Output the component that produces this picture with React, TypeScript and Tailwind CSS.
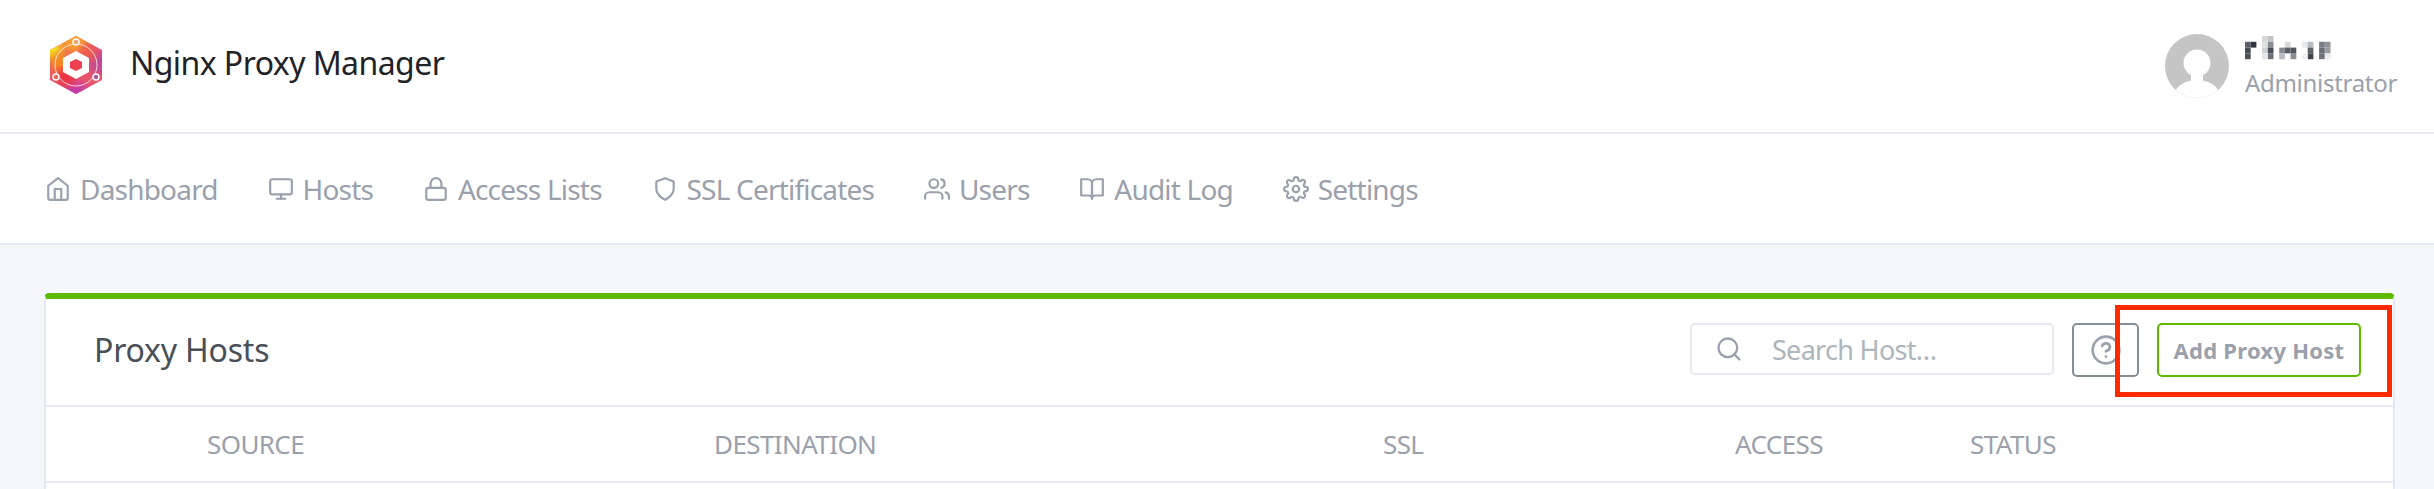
import React from "react";

const Ico = ({ children, className = "w-[26px] h-[26px]" }: { children: React.ReactNode; className?: string }) => (
  <svg viewBox="0 0 24 24" fill="none" stroke="currentColor" strokeWidth="2" strokeLinecap="round" strokeLinejoin="round" className={className}>
    {children}
  </svg>
);

const nav: [string, React.ReactNode][] = [
  ["Dashboard", <><path d="M3 9l9-7 9 7v11a2 2 0 0 1-2 2H5a2 2 0 0 1-2-2z" /><polyline points="9 22 9 12 15 12 15 22" /></>],
  ["Hosts", <><rect x="2" y="3" width="20" height="14" rx="2" /><line x1="8" y1="21" x2="16" y2="21" /><line x1="12" y1="17" x2="12" y2="21" /></>],
  ["Access Lists", <><rect x="3" y="11" width="18" height="11" rx="2" /><path d="M7 11V7a5 5 0 0 1 10 0v4" /></>],
  ["SSL Certificates", <path d="M12 22s8-4 8-10V5l-8-3-8 3v7c0 6 8 10 8 10z" />],
  ["Users", <><path d="M17 21v-2a4 4 0 0 0-4-4H5a4 4 0 0 0-4 4v2" /><circle cx="9" cy="7" r="4" /><path d="M23 21v-2a4 4 0 0 0-3-3.87" /><path d="M16 3.13a4 4 0 0 1 0 7.75" /></>],
  ["Audit Log", <><path d="M2 3h6a4 4 0 0 1 4 4v14a3 3 0 0 0-3-3H2z" /><path d="M22 3h-6a4 4 0 0 0-4 4v14a3 3 0 0 1 3-3h7z" /></>],
  ["Settings", <><circle cx="12" cy="12" r="3" /><path d="M19.4 15a1.65 1.65 0 0 0 .33 1.82l.06.06a2 2 0 0 1 0 2.83 2 2 0 0 1-2.83 0l-.06-.06a1.65 1.65 0 0 0-1.82-.33 1.65 1.65 0 0 0-1 1.51V21a2 2 0 0 1-2 2 2 2 0 0 1-2-2v-.09A1.65 1.65 0 0 0 9 19.4a1.65 1.65 0 0 0-1.82.33l-.06.06a2 2 0 0 1-2.83 0 2 2 0 0 1 0-2.83l.06-.06a1.65 1.65 0 0 0 .33-1.82 1.65 1.65 0 0 0-1.51-1H3a2 2 0 0 1-2-2 2 2 0 0 1 2-2h.09A1.65 1.65 0 0 0 4.6 9a1.65 1.65 0 0 0-.33-1.82l-.06-.06a2 2 0 0 1 0-2.83 2 2 0 0 1 2.83 0l.06.06a1.65 1.65 0 0 0 1.82.33H9a1.65 1.65 0 0 0 1-1.51V3a2 2 0 0 1 2-2 2 2 0 0 1 2 2v.09a1.65 1.65 0 0 0 1 1.51 1.65 1.65 0 0 0 1.82-.33l.06-.06a2 2 0 0 1 2.83 0 2 2 0 0 1 0 2.83l-.06.06a1.65 1.65 0 0 0-.33 1.82V9a1.65 1.65 0 0 0 1.51 1H21a2 2 0 0 1 2 2 2 2 0 0 1-2 2h-.09a1.65 1.65 0 0 0-1.51 1z" /></>],
];

const Logo = () => (
  <svg viewBox="0 0 60 64" className="w-[60px] h-[64px] mb-[2px]">
    <defs>
      <clipPath id="hex"><polygon points="30,3 56,17 56,47 30,61 4,47 4,17" /></clipPath>
      <filter id="soft"><feGaussianBlur stdDeviation="0.7" /></filter>
      <filter id="big"><feGaussianBlur stdDeviation="4" /></filter>
    </defs>
    <g filter="url(#soft)">
      <g clipPath="url(#hex)">
        <rect width="60" height="64" fill="#e8566a" />
        <circle cx="6" cy="16" r="11" fill="#f5e01c" filter="url(#big)" />
        <circle cx="28" cy="6" r="14" fill="#f9a02a" filter="url(#big)" />
        <circle cx="14" cy="30" r="10" fill="#f78a1e" filter="url(#big)" />
        <circle cx="54" cy="30" r="11" fill="#c2489a" filter="url(#big)" />
        <circle cx="30" cy="62" r="13" fill="#c43aa8" filter="url(#big)" />
        <circle cx="20" cy="44" r="9" fill="#ea2f3c" filter="url(#big)" />
        <circle cx="42" cy="20" r="8" fill="#ee5a4a" filter="url(#big)" />
      </g>
      <circle cx="30" cy="32" r="21" fill="none" stroke="#fff" strokeOpacity="0.75" strokeWidth="1" />
      <circle cx="30" cy="9" r="3" fill="#f0a56a" stroke="#fff" strokeWidth="1.4" />
      <circle cx="10" cy="44" r="3" fill="#ec6a56" stroke="#fff" strokeWidth="1.4" />
      <circle cx="50" cy="44" r="3" fill="#a95ca6" stroke="#fff" strokeWidth="1.4" />
      <polygon points="30,18 43,25 43,39 30,46 17,39 17,25" fill="#fff" />
      <polygon points="30,26 36,29 36,35 30,38 24,35 24,29" fill="#ef3f4f" />
    </g>
  </svg>
);

const Avatar = () => (
  <svg viewBox="0 0 64 64" className="w-16 h-16 shrink-0">
    <defs>
      <clipPath id="av"><circle cx="32" cy="32" r="32" /></clipPath>
    </defs>
    <g clipPath="url(#av)">
      <rect width="64" height="64" fill="#c5c5c5" />
      <circle cx="32" cy="29" r="13.5" fill="#fff" />
      <rect x="26" y="38" width="12" height="12" fill="#fff" />
      <ellipse cx="32" cy="62" rx="23" ry="16" fill="#fff" />
    </g>
  </svg>
);

const mosaic: [number, number, string][] = [
  [0, 1, "#5b6068"], [1, 1, "#30363f"], [0, 2, "#4a5058"], [0, 3, "#4d535b"],
  [3, 1, "#dfe0e2"], [3, 2, "#cfd1d4"], [4, 1, "#8a8e94"], [4, 0, "#c0c2c5"], [3, 0, "#d4d6d8"],
  [4, 2, "#4a5058"], [4, 3, "#6d7278"], [3, 3, "#e6e7e8"],
  [6, 2, "#888c92"], [6, 3, "#b7babe"], [7, 1, "#d6d8da"], [7, 2, "#5a5f67"], [8, 3, "#8b8f95"], [8, 2, "#50565e"],
  [10, 1, "#e9eaeb"], [11, 1, "#b8bbbe"], [11, 2, "#5e636a"], [11, 3, "#3f454d"], [10, 3, "#f0f0f1"],
  [13, 1, "#777c82"], [14, 1, "#8e9297"], [13, 2, "#6b7076"], [14, 2, "#9a9da2"], [13, 3, "#6f7379"], [14, 3, "#ececed"],
];

export default function App() {
  return (
    <div className="h-[489px] overflow-hidden bg-[#f5f7fb] font-['Noto_Sans',sans-serif]">
      <header className="h-[134px] bg-white border-b-2 border-[#e6e9f1] flex items-center justify-between pl-[46px] pr-[37px]">
        <div className="flex items-center gap-[24px]">
          <Logo />
          <span className="text-[32px] leading-none tracking-[-0.57px] text-[#1f2226] mb-[6px]">Nginx Proxy Manager</span>
        </div>
        <div className="flex items-center gap-[16px]">
          <Avatar />
          <div className="flex flex-col pt-[3px]">
            <svg viewBox="0 0 90 24" className="w-[90px] h-[24px] mb-[6px]">
              {mosaic.map(([x, y, c], i) => (
                <rect key={i} x={x * 5.7} y={y * 5.8} width="5.7" height="5.8" fill={c} />
              ))}
            </svg>
            <span className="text-[24px] leading-[34px] tracking-[-0.3px] text-[#9aa0ac]">Administrator</span>
          </div>
        </div>
      </header>
      <nav className="h-[111px] bg-white border-b-2 border-[#e6e9f1] flex items-center pl-[45px] gap-[49.75px] text-[#9aa0ac]">
        {nav.map(([label, icon]) => (
          <div key={label} className="flex items-center gap-[9px]">
            <Ico>{icon}</Ico>
            <span className="text-[28px] leading-none tracking-[-0.8px]">{label}</span>
          </div>
        ))}
      </nav>
      <main className="pt-[48px] pl-[44px] pr-[39px]">
        <section className="relative bg-white border-t-[6px] border-x-2 border-t-[#5eba00] border-x-[#e6e9f1] rounded-t-[5px]">
          <div className="h-[108px] border-b-2 border-[#e6e9f1] flex items-center pl-[48px] pr-[32px] pb-[4px]">
            <h2 className="text-[32px] leading-none tracking-[-0.2px] text-[#495057]">Proxy Hosts</h2>
            <div className="ml-auto flex items-start">
              <div className="w-[364px] h-[52px] border-2 border-[#e6e9f1] rounded-[5px] flex items-center pl-[23px] text-[#9aa0ac]">
                <Ico className="w-[28px] h-[28px]"><circle cx="11" cy="11" r="8" /><line x1="21" y1="21" x2="16.65" y2="16.65" /></Ico>
                <span className="ml-[29px] text-[27px] leading-none tracking-[-0.7px] text-[#adb5bd]">Search Host…</span>
              </div>
              <div className="ml-[18px] w-[67px] h-[54px] border-2 border-[#868e96] rounded-[5px] flex items-center justify-center text-[#9aa0ac]">
                <Ico className="w-[32px] h-[32px]"><circle cx="12" cy="12" r="10" /><path d="M9.09 9a3 3 0 0 1 5.83 1c0 2-3 3-3 3" /><line x1="12" y1="17" x2="12.01" y2="17" /></Ico>
              </div>
              <div className="ml-[18px] w-[204px] h-[54px] border-2 border-[#5eba00] rounded-[5px] flex items-center justify-center text-[#9aa0ac]">
                <span className="text-[22px] leading-none font-bold tracking-[0.25px]">Add Proxy Host</span>
              </div>
            </div>
          </div>
          <div className="h-[76px] border-b-2 border-[#e6e9f1] grid grid-cols-[507px_669px_352px_235px_1fr] pl-[161px] items-center text-[26px] leading-none tracking-[-0.6px] text-[#9aa0ac]">
            <span>SOURCE</span>
            <span>DESTINATION</span>
            <span>SSL</span>
            <span>ACCESS</span>
            <span>STATUS</span>
          </div>
          <div className="h-[40px]" />
          <div className="absolute left-[2069px] top-[6px] w-[277px] h-[92px] border-[5px] border-[#ff2a00]" />
        </section>
      </main>
    </div>
  );
}
